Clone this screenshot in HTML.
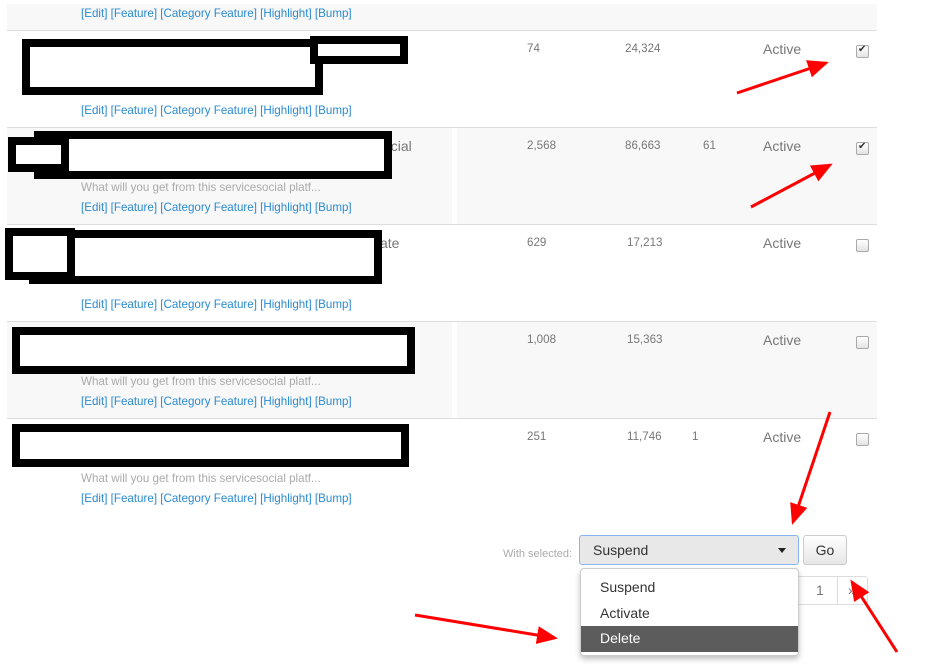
<!DOCTYPE html>
<html><head><meta charset="utf-8"><style>
*{margin:0;padding:0;box-sizing:border-box}
body{width:932px;height:670px;background:#fff;position:relative;overflow:hidden;font-family:"Liberation Sans",sans-serif}
.a{position:absolute}
.row{position:absolute;left:7px;width:870px;border-top:1px solid #ddd}
.g{background:#f8f8f8}
.lk{position:absolute;left:81px;font-size:11.6px;color:#2a8bd0;white-space:nowrap}
.ds{position:absolute;left:81px;font-size:11.6px;color:#aaa;white-space:nowrap}
.n{position:absolute;font-size:11.6px;color:#777}
.act{position:absolute;left:763px;font-size:14px;color:#777}
.cb{position:absolute;left:856px;width:13px;height:13px;border:1px solid #aaa;border-radius:2px;background:linear-gradient(#fff,#e3e3e3)}
.cb.c::after{content:"✔";position:absolute;left:1px;top:-2px;font-size:10px;color:#333}
.bx{position:absolute;border:8px solid #000;background:#fff}
</style></head><body>
<div class="row g" style="top:4px;height:27px;border-top:none"></div>
<div class="lk" style="top:7px">[Edit] [Feature] [Category Feature] [Highlight] [Bump]</div>

<div class="row" style="top:30px;height:97px"></div>
<div class="row g" style="top:127px;height:97px"></div>
<div class="row" style="top:224px;height:97px"></div>
<div class="row g" style="top:321px;height:97px"></div>
<div class="row" style="top:418px;height:97px;border-bottom:none"></div>
<div class="a" style="left:452px;top:128px;width:5px;height:96px;background:#fff"></div>
<div class="a" style="left:452px;top:322px;width:5px;height:96px;background:#fff"></div>

<div class="lk" style="top:104px">[Edit] [Feature] [Category Feature] [Highlight] [Bump]</div>
<div class="ds" style="top:181px">What will you get from this servicesocial platf...</div>
<div class="lk" style="top:201px">[Edit] [Feature] [Category Feature] [Highlight] [Bump]</div>
<div class="lk" style="top:298px">[Edit] [Feature] [Category Feature] [Highlight] [Bump]</div>
<div class="ds" style="top:375px">What will you get from this servicesocial platf...</div>
<div class="lk" style="top:395px">[Edit] [Feature] [Category Feature] [Highlight] [Bump]</div>
<div class="ds" style="top:472px">What will you get from this servicesocial platf...</div>
<div class="lk" style="top:492px">[Edit] [Feature] [Category Feature] [Highlight] [Bump]</div>

<div class="a" style="left:383px;top:138px;font-size:14px;color:#777">ocial</div>
<div class="a" style="left:380px;top:235px;font-size:14px;color:#777">ate</div>

<div class="bx" style="left:22px;top:39px;width:301px;height:56px"></div>
<div class="bx" style="left:310px;top:36px;width:98px;height:28px"></div>
<div class="bx" style="left:34px;top:131px;width:358px;height:48px"></div>
<div class="bx" style="left:8px;top:137px;width:61px;height:35px"></div>
<div class="bx" style="left:29px;top:230px;width:353px;height:54px"></div>
<div class="bx" style="left:5px;top:228px;width:70px;height:52px"></div>
<div class="bx" style="left:12px;top:327px;width:403px;height:47px"></div>
<div class="bx" style="left:12px;top:424px;width:397px;height:43px"></div>

<div class="n" style="left:527px;top:42px">74</div><div class="n" style="left:625px;top:42px">24,324</div>
<div class="n" style="left:527px;top:139px">2,568</div><div class="n" style="left:625px;top:139px">86,663</div><div class="n" style="left:703px;top:139px">61</div>
<div class="n" style="left:527px;top:236px">629</div><div class="n" style="left:627px;top:236px">17,213</div>
<div class="n" style="left:527px;top:333px">1,008</div><div class="n" style="left:627px;top:333px">15,363</div>
<div class="n" style="left:527px;top:430px">251</div><div class="n" style="left:627px;top:430px">11,746</div><div class="n" style="left:692px;top:430px">1</div>

<div class="act" style="top:41px">Active</div><div class="act" style="top:138px">Active</div><div class="act" style="top:235px">Active</div><div class="act" style="top:332px">Active</div><div class="act" style="top:429px">Active</div>
<div class="cb c" style="top:45px"></div><div class="cb c" style="top:142px"></div><div class="cb" style="top:239px"></div><div class="cb" style="top:336px"></div><div class="cb" style="top:433px"></div>

<div class="a" style="left:503px;top:548px;font-size:11px;color:#aaa">With selected:</div>
<div class="a" style="left:579px;top:535px;width:220px;height:30px;background:#e8e8e8;border:1px solid #8ab4f0;border-radius:3px;font-size:14px;color:#333;padding:6px 0 0 13px">Suspend</div>
<div class="a" style="left:778px;top:548px;width:0;height:0;border-left:4px solid transparent;border-right:4px solid transparent;border-top:5px solid #222"></div>
<div class="a" style="left:803px;top:535px;width:44px;height:30px;background:linear-gradient(#fff,#e6e6e6);border:1px solid #ccc;border-radius:3px;font-size:14px;color:#333;text-align:center;padding-top:6px">Go</div>
<div class="a" style="left:795px;top:576px;width:73px;height:29px;border:1px solid #ddd;border-radius:3px"></div>
<div class="a" style="left:837px;top:576px;width:1px;height:29px;background:#ddd"></div>
<div class="a" style="left:816px;top:582px;font-size:14px;color:#777">1</div>
<div class="a" style="left:848px;top:582px;font-size:14px;color:#777">»</div>
<div class="a" style="left:580px;top:568px;width:219px;height:88px;background:#fff;border:1px solid #ccc;border-radius:4px;box-shadow:0 3px 6px rgba(0,0,0,.25);font-size:14px;color:#333">
<div style="position:absolute;left:19px;top:10px">Suspend</div>
<div style="position:absolute;left:19px;top:36px">Activate</div>
<div style="position:absolute;left:0;top:57px;width:217px;height:26px;background:#5c5c5c;color:#fff;padding:4px 0 0 19px">Delete</div>
</div>

<svg class="a" style="left:0;top:0" width="932" height="670">
<defs><marker id="h" markerWidth="7" markerHeight="6" refX="6" refY="3" orient="auto" markerUnits="strokeWidth"><path d="M0,0 L7,3 L0,6 z" fill="#f00"/></marker></defs>
<g stroke="#f00" stroke-width="3" fill="none" marker-end="url(#h)">
<line x1="737" y1="93" x2="826" y2="63"/>
<line x1="751" y1="207" x2="830" y2="165"/>
<line x1="830" y1="412" x2="793" y2="522"/>
<line x1="897" y1="652" x2="852" y2="582"/>
<line x1="415" y1="615" x2="555" y2="638"/>
</g></svg>
</body></html>
